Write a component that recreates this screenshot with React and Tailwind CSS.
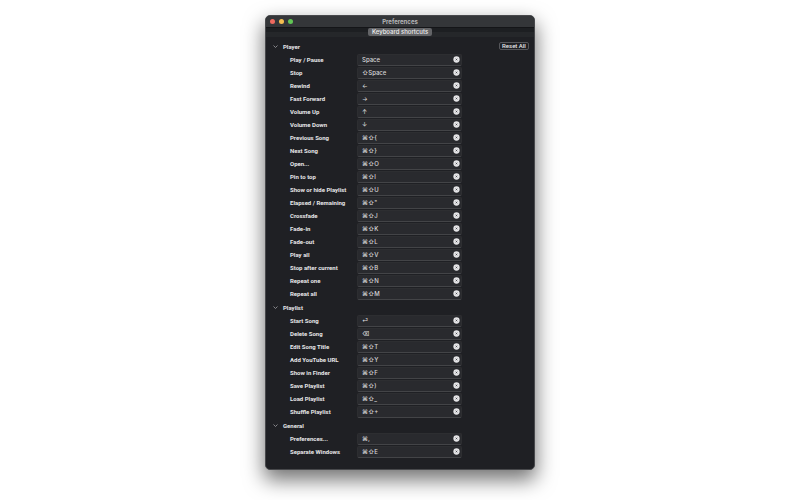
const groups = [
  {
    title: "Player",
    items: [
      ["Play / Pause", "Space"],
      ["Stop", "⇧Space"],
      ["Rewind", "←"],
      ["Fast Forward", "→"],
      ["Volume Up", "↑"],
      ["Volume Down", "↓"],
      ["Previous Song", "⌘⇧{"],
      ["Next Song", "⌘⇧}"],
      ["Open...", "⌘⇧O"],
      ["Pin to top", "⌘⇧I"],
      ["Show or hide Playlist", "⌘⇧U"],
      ["Elapsed / Remaining", "⌘⇧\""],
      ["Crossfade", "⌘⇧J"],
      ["Fade-in", "⌘⇧K"],
      ["Fade-out", "⌘⇧L"],
      ["Play all", "⌘⇧V"],
      ["Stop after current", "⌘⇧B"],
      ["Repeat one", "⌘⇧N"],
      ["Repeat all", "⌘⇧M"],
    ],
  },
  {
    title: "Playlist",
    items: [
      ["Start Song", "⏎"],
      ["Delete Song", "⌫"],
      ["Edit Song Title", "⌘⇧T"],
      ["Add YouTube URL", "⌘⇧Y"],
      ["Show in Finder", "⌘⇧F"],
      ["Save Playlist", "⌘⇧)"],
      ["Load Playlist", "⌘⇧_"],
      ["Shuffle Playlist", "⌘⇧+"],
    ],
  },
  {
    title: "General",
    items: [
      ["Preferences...", "⌘,"],
      ["Separate Windows", "⌘⇧E"],
    ],
  },
];

function ShortcutRow({ id, label, value }) {
  return (
    <div className="flex h-[13px] items-center pl-[17px]">
      <label htmlFor={id} className="w-[67px] shrink-0 font-['Roboto','Inter',sans-serif] font-bold whitespace-nowrap">
        {label}
      </label>
      <div className="flex h-3 w-[105px] items-center rounded-[2px] border border-[#2d2e31] border-b-[#434447] bg-[#292a2e] pr-px pl-1">
        <input
          id={id}
          defaultValue={value}
          className="h-[10px] min-w-0 flex-1 bg-transparent font-medium text-[#d6d6d8] outline-none"
        />
        <button type="button" aria-label={`Clear ${label}`} className="shrink-0">
          <svg viewBox="0 0 14 14" className="block size-[7px]">
            <circle cx="7" cy="7" r="6.3" fill="#e4e4e6" />
            <path d="M5.4 5.4l3.2 3.2M8.6 5.4l-3.2 3.2" stroke="#3a3b3f" strokeWidth="1.4" />
          </svg>
        </button>
      </div>
    </div>
  );
}

function Group({ title, items }) {
  return (
    <section>
      <h2>
        <button type="button" aria-expanded="true" className="flex h-[13px] items-center font-['Roboto','Inter',sans-serif] font-bold">
          <svg viewBox="0 0 10 10" className="mr-[5px] size-[5px]" fill="none" stroke="#a0a0a3" strokeWidth="1.6">
            <path d="M1 3l4 4 4-4" />
          </svg>
          {title}
        </button>
      </h2>
      {items.map(([label, value], i) => (
        <ShortcutRow key={label} id={`${title}-${i}`} label={label} value={value} />
      ))}
    </section>
  );
}

export default function App() {
  return (
    <div className="min-h-screen bg-white px-4 pt-[15px] pb-[30px] font-['Inter','DejaVu_Sans',sans-serif] text-[6px] leading-[8px] text-[#e6e6e8]">
      <main className="mx-auto max-w-[270px] overflow-hidden rounded-[5px] border border-[#48494c] bg-[#1f2024] shadow-[0_9px_20px_1px_rgba(0,0,0,0.55)]">
        <header className="grid h-[11px] grid-cols-[1fr_auto_1fr] items-center bg-[#343639] px-1">
          <div className="flex gap-1">
            <button type="button" aria-label="Close" className="size-[5px] rounded-full bg-[#ee6a5f]" />
            <button type="button" aria-label="Minimize" className="size-[5px] rounded-full bg-[#f4be50]" />
            <button type="button" aria-label="Zoom" className="size-[5px] rounded-full bg-[#61c555]" />
          </div>
          <h1 className="font-bold text-[#b4b5b7]">Preferences</h1>
        </header>
        <nav className="flex h-[10px] items-start justify-center border-t border-[#141518] bg-linear-to-b from-[#1d1f22] from-40% to-[#25272a] to-40%">
          <button type="button" className="h-2 w-16 rounded-[2px] bg-[#636467] font-medium text-[#ededee]">
            Keyboard shortcuts
          </button>
        </nav>
        <div className="flex items-start justify-between pt-[3px] pr-[5px] pb-[11px] pl-[7px]">
          <div className="flex flex-col gap-px">
            {groups.map((g) => (
              <Group key={g.title} {...g} />
            ))}
          </div>
          <button type="button" className="mt-0.5 flex h-2 w-[30px] items-center justify-center rounded-[2px] border border-[#55565a] font-['Roboto','Inter',sans-serif] font-medium whitespace-nowrap">
            Reset All
          </button>
        </div>
      </main>
    </div>
  );
}
